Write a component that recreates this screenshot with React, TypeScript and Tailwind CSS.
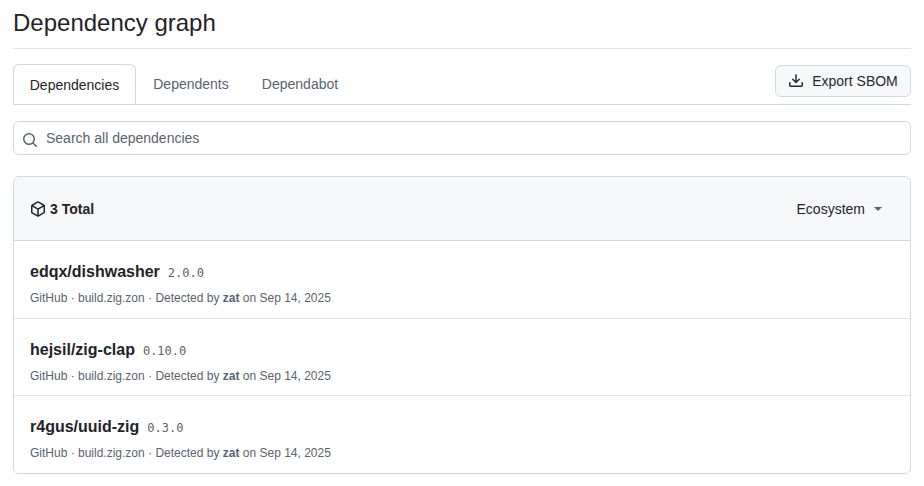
const deps = [
  { name: "edqx/dishwasher", version: "2.0.0", height: "h-[77px]" },
  { name: "hejsil/zig-clap", version: "0.10.0", height: "h-[77px]" },
  { name: "r4gus/uuid-zig", version: "0.3.0", height: "h-[78px]" },
];

function SearchIcon() {
  return (
    <svg viewBox="0 0 16 16" width="16" height="16" fill="currentColor" className="text-[#59636e]">
      <path d="M10.68 11.74a6 6 0 0 1-7.922-8.982 6 6 0 0 1 8.982 7.922l3.04 3.04a.749.749 0 0 1-.326 1.275.749.749 0 0 1-.734-.215ZM11.5 7a4.499 4.499 0 1 0-8.997 0A4.499 4.499 0 0 0 11.5 7Z" />
    </svg>
  );
}

function DownloadIcon() {
  return (
    <svg viewBox="0 0 16 16" width="16" height="16" fill="currentColor" className="text-[#25292e]">
      <path d="M2.75 14A1.75 1.75 0 0 1 1 12.25v-2.5a.75.75 0 0 1 1.5 0v2.5c0 .138.112.25.25.25h10.5a.25.25 0 0 0 .25-.25v-2.5a.75.75 0 0 1 1.5 0v2.5A1.75 1.75 0 0 1 13.25 14Z" />
      <path d="M7.25 7.689V2a.75.75 0 0 1 1.5 0v5.689l1.97-1.969a.749.749 0 1 1 1.06 1.06l-3.25 3.25a.749.749 0 0 1-1.06 0L4.22 6.78a.749.749 0 1 1 1.06-1.06l1.97 1.969Z" />
    </svg>
  );
}

function PackageIcon() {
  return (
    <svg viewBox="0 0 16 16" width="16" height="16" fill="currentColor" className="text-[#1f2328]">
      <path d="m8.878.392 5.25 3.045c.54.314.872.89.872 1.514v6.098a1.75 1.75 0 0 1-.872 1.514l-5.25 3.045a1.75 1.75 0 0 1-1.756 0l-5.25-3.045A1.75 1.75 0 0 1 1 11.049V4.951c0-.624.332-1.201.872-1.514L7.122.392a1.75 1.75 0 0 1 1.756 0ZM7.875 1.69l-4.63 2.685L8 7.133l4.755-2.758-4.63-2.685a.248.248 0 0 0-.25 0ZM2.5 5.677v5.372c0 .09.047.171.125.216l4.625 2.683V8.432Zm6.25 8.271 4.625-2.683a.25.25 0 0 0 .125-.216V5.677L8.75 8.432Z" />
    </svg>
  );
}

export default function App() {
  return (
    <div className="w-[924px] h-[486px] overflow-hidden bg-white px-[13px] font-['Liberation_Sans',Arial,sans-serif] text-sm text-[#1f2328]">
      {/* Page heading */}
      <div className="h-[49px] border-b border-[#d1d9e0b3] pt-[5px]">
        <h2 className="text-2xl leading-[36px] font-normal">Dependency graph</h2>
      </div>

      {/* Tabs */}
      <div className="mt-4 flex h-10 items-end justify-between border-b border-[#d1d9e0]">
        <div className="flex h-10">
          <div className="-mb-px flex h-10 w-[123px] items-center justify-center rounded-t-md border border-b-0 border-[#d1d9e0] bg-white">
            Dependencies
          </div>
          <div className="flex h-10 w-[110px] items-center justify-center text-[#59636e]">Dependents</div>
          <div className="flex h-10 w-[110px] items-center justify-center pr-[2px] text-[#59636e]">Dependabot</div>
        </div>
        <button className="mb-[7px] flex h-8 w-[136px] items-center justify-center gap-2 rounded-md border border-[#d1d9e0] bg-[#f6f8fa] font-medium text-[#25292e]">
          <DownloadIcon />
          Export SBOM
        </button>
      </div>

      {/* Search */}
      <div className="mt-4 flex h-[34px] items-center rounded-md border border-[#d1d9e0] pl-2 text-[#59636e]">
        <span className="mt-[4px]">
          <SearchIcon />
        </span>
        <span className="ml-2">Search all dependencies</span>
      </div>

      {/* Dependency list */}
      <div className="mt-[21px] rounded-md border border-[#d1d9e0]">
        <div className="flex h-[64px] items-center justify-between rounded-t-md border-b border-[#d1d9e0] bg-[#f6f8fa] pl-4 pr-[28px]">
          <div className="flex items-center gap-1 font-semibold font-bold">
            <PackageIcon />
            3 Total
          </div>
          <div className="flex items-center gap-2">
            Ecosystem
            <span className="ml-[1px] h-0 w-0 border-x-4 border-t-4 border-x-transparent border-t-[#59636e]" />
          </div>
        </div>
        {deps.map((dep, index) => (
          <div
            key={dep.name}
            className={`${dep.height} pl-4 pt-[19px] ${index > 0 ? "border-t border-[#d1d9e0b3]" : ""}`}
          >
            <div className="flex items-baseline gap-2 leading-5">
              <span className="text-base font-bold">{dep.name}</span>
              <span className="font-['DejaVu_Sans_Mono',monospace] text-xs text-[#59636e]">{dep.version}</span>
            </div>
            <div className="mt-[5px] text-xs leading-[18px] text-[#59636e]">
              GitHub · build.zig.zon · Detected by <b className="font-bold">zat</b> on Sep 14, 2025
            </div>
          </div>
        ))}
      </div>
    </div>
  );
}
